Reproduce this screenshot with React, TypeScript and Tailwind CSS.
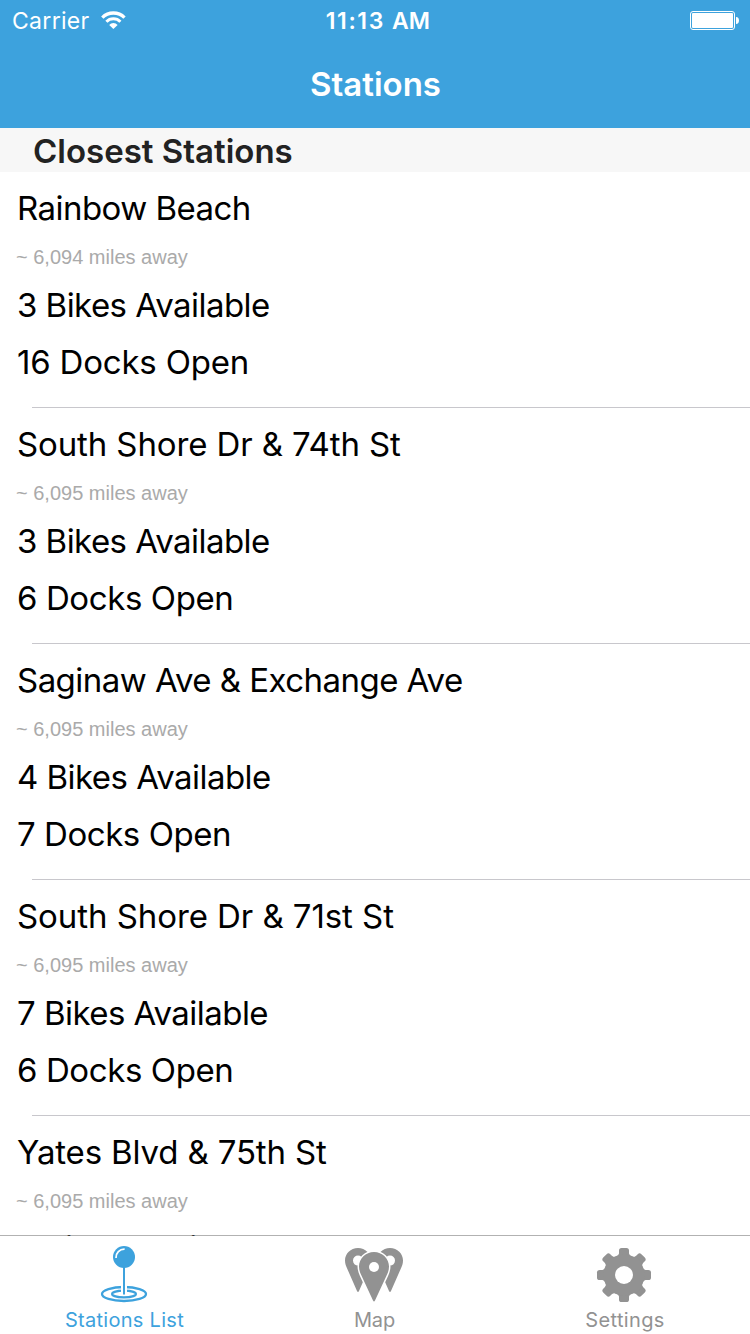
import React from 'react';

type Station = {
  name: string;
  nameSpacing: string;
  distance: string;
  bikes: number;
  bikesMargin: string;
  docks?: number;
  docksSpacing?: string;
};

const stations: Station[] = [
  { name: 'Rainbow Beach', nameSpacing: 'tracking-[-0.55px]', distance: '6,094', bikes: 3, bikesMargin: 'mt-4', docks: 16, docksSpacing: 'tracking-[-0.2px]' },
  { name: 'South Shore Dr & 74th St', nameSpacing: 'tracking-[-0.12px]', distance: '6,095', bikes: 3, bikesMargin: 'mt-4', docks: 6, docksSpacing: 'tracking-[-0.4px]' },
  { name: 'Saginaw Ave & Exchange Ave', nameSpacing: 'tracking-[-0.54px]', distance: '6,095', bikes: 4, bikesMargin: 'mt-4', docks: 7, docksSpacing: 'tracking-[-0.45px]' },
  { name: 'South Shore Dr & 71st St', nameSpacing: 'tracking-[-0.07px]', distance: '6,095', bikes: 7, bikesMargin: 'mt-4', docks: 6, docksSpacing: 'tracking-[-0.4px]' },
  { name: 'Yates Blvd & 75th St', nameSpacing: 'tracking-[-0.15px]', distance: '6,095', bikes: 7, bikesMargin: 'mt-[15px]' },
];

function WifiIcon() {
  return (
    <svg className="ml-[11px] h-[19px] w-[25px]" viewBox="0 0 25 19" fill="none" stroke="#fff">
      <path d="M1.3 6.6A15.7 15.7 0 0 1 23.5 6.6" strokeWidth="3.3" />
      <path d="M5.4 10.8A9.8 9.8 0 0 1 19.4 10.8" strokeWidth="3" />
      <path d="M12.4 18L8.2 13.9A5.8 5.8 0 0 1 16.6 13.9Z" fill="#fff" stroke="none" />
    </svg>
  );
}

function BatteryIcon() {
  return (
    <svg className="h-[19px] w-[49px]" viewBox="0 0 49 19">
      <rect x="0.5" y="0.5" width="44" height="18" rx="2.5" fill="none" stroke="#fff" />
      <rect x="2" y="2" width="41" height="15" rx="1" fill="#fff" />
      <path d="M46 6C48.2 6.2 49 7.6 49 9.5S48.2 12.8 46 13Z" fill="#fff" />
    </svg>
  );
}

function PinIcon() {
  return (
    <svg className="h-[58px] w-[60px]" viewBox="0 0 60 58" fill="none">
      <ellipse cx="29" cy="49" rx="22" ry="7" stroke="currentColor" strokeWidth="2.3" />
      <ellipse cx="29" cy="49" rx="12" ry="3.4" stroke="currentColor" strokeWidth="2.2" />
      <path d="M26 40H32V49.5H26Z" fill="#fff" />
      <path d="M28 20H30V49.5H28Z" fill="currentColor" />
      <circle cx="29" cy="12" r="11" fill="currentColor" />
      <path d="M21 13A8.3 8.3 0 0 1 29.6 4.2" stroke="#fff" strokeWidth="1.8" />
    </svg>
  );
}

function MapIcon() {
  return (
    <svg className="h-[58px] w-[60px]" viewBox="0 0 60 58" fill="currentColor">
      <path
        fillRule="evenodd"
        d="M13 3C5.600 3 0 8.600 0 15.500C0 18.500 1 21 2 23.200L12 46Q13 48 14 46L24 23.200C25 21 26 18.500 26 15.500C26 8.600 20.400 3 13 3ZM13 10.600A5 5 0 1 1 13 20.600A5 5 0 1 1 13 10.600Z"
      />
      <path
        fillRule="evenodd"
        d="M45 3C37.600 3 32 8.600 32 15.500C32 18.500 33 21 34 23.200L44 46Q45 48 46 46L56 23.200C57 21 58 18.500 58 15.500C58 8.600 52.400 3 45 3ZM45 10.600A5 5 0 1 1 45 20.600A5 5 0 1 1 45 10.600Z"
      />
      <path
        d="M29 7C20.700 7 14 13.700 14 21.500C14 25 15 27.500 16.300 30.300L28 55.600Q29 57.600 30 55.600L41.700 30.300C43 27.500 44 25 44 21.500C44 13.700 37.300 7 29 7Z"
        stroke="#fff"
        strokeWidth="3"
        paintOrder="stroke"
      />
      <circle cx="29" cy="22" r="5" fill="#fff" />
    </svg>
  );
}

const teeth = [0, 45, 90, 135];

function GearIcon() {
  return (
    <svg className="h-[58px] w-[60px]" viewBox="0 0 60 58" fill="currentColor">
      {teeth.map((angle) => (
        <g key={angle} transform={`rotate(${angle} 29 30)`}>
          <rect x="24" y="3" width="10" height="54" rx="2.6" />
          <path d="M24 8.500Q23.600 10.500 21 11.500H37Q34.400 10.500 34 8.500Z" />
          <path d="M24 51.500Q23.600 49.500 21 48.500H37Q34.400 49.500 34 51.500Z" />
        </g>
      ))}
      <circle cx="29" cy="30" r="20.5" />
      <circle cx="29" cy="30" r="9" fill="#fff" />
    </svg>
  );
}

function StationRow({ station }: { station: Station }) {
  return (
    <li className="h-[236px] shrink-0">
      <div className="flex h-[235px] flex-col pt-4 pr-4 pl-[17px] text-[33px] leading-10 whitespace-nowrap text-black">
        <h3 className={station.nameSpacing}>{station.name}</h3>
        <p className="mt-[17px] -ml-px font-['Liberation_Sans',sans-serif] text-xl leading-6 text-[#aaaaaa]">
          ~ {station.distance} miles away
        </p>
        <p className={`${station.bikesMargin} tracking-[-0.54px]`}>{station.bikes} Bikes Available</p>
        {station.docks !== undefined && (
          <p className={`mt-[17px] ${station.docksSpacing}`}>{station.docks} Docks Open</p>
        )}
      </div>
      <div className="ml-8 h-px bg-[#c8c7cc]" />
    </li>
  );
}

export default function App() {
  return (
    <div className="flex h-[1334px] w-[750px] flex-col overflow-hidden bg-white font-[Inter,sans-serif]">
      <header className="shrink-0 bg-[#3da2dd] text-white">
        <div className="grid h-10 grid-cols-3 text-[23px] leading-[42px] whitespace-nowrap">
          <div className="flex items-start pl-3">
            <span className="tracking-[0.3px]">Carrier</span>
            <div className="mt-[11px]">
              <WifiIcon />
            </div>
          </div>
          <div className="flex justify-center pl-1.5 font-semibold">
            <span className="tracking-[1.6px]">11:13</span>
            <span className="ml-[7px] tracking-[0.2px]">AM</span>
          </div>
          <div className="flex justify-end pt-[11px] pr-[11px]">
            <BatteryIcon />
          </div>
        </div>
        <h1 className="h-[88px] pl-px text-center text-[33px] leading-[88px] font-semibold">Stations</h1>
      </header>

      <main className="flex min-h-0 flex-1 flex-col overflow-hidden">
        <h2 className="h-11 shrink-0 bg-[#f7f7f7] pl-[33px] text-[33px] leading-[46px] font-semibold text-[#222222]">
          Closest Stations
        </h2>
        <ul className="flex flex-col">
          {stations.map((station) => (
            <StationRow key={station.name} station={station} />
          ))}
        </ul>
      </main>

      <nav className="relative -mt-px grid h-[99px] shrink-0 grid-cols-3 border-t border-black/30 bg-white bg-clip-padding pt-[9px] text-xl leading-[29px] text-[#929292]">
        <a className="flex flex-col items-center text-[#3da2dd]">
          <PinIcon />
          <span className="mt-[3px] -ml-px tracking-[0.28px]">Stations List</span>
        </a>
        <a className="flex flex-col items-center">
          <MapIcon />
          <span className="mt-[3px] -ml-px tracking-[-0.1px]">Map</span>
        </a>
        <a className="flex flex-col items-center">
          <GearIcon />
          <span className="mt-[3px] tracking-[0.35px]">Settings</span>
        </a>
      </nav>
    </div>
  );
}
